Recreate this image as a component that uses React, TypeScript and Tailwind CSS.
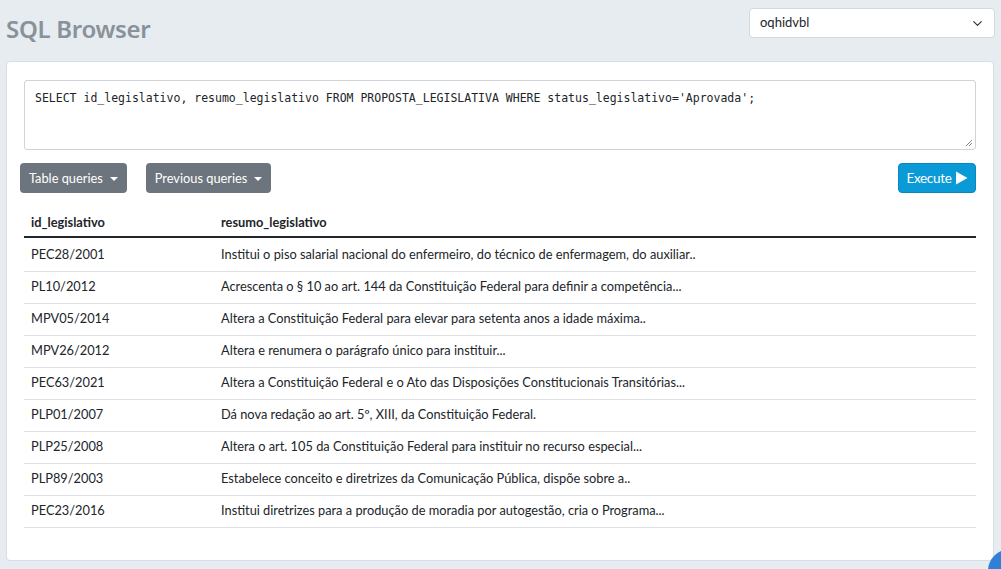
import { ChevronDown } from "lucide-react";

const rows = [
  ["PEC28/2001", "Institui o piso salarial nacional do enfermeiro, do técnico de enfermagem, do auxiliar.."],
  ["PL10/2012", "Acrescenta o § 10 ao art. 144 da Constituição Federal para definir a competência..."],
  ["MPV05/2014", "Altera a Constituição Federal para elevar para setenta anos a idade máxima.."],
  ["MPV26/2012", "Altera e renumera o parágrafo único para instituir..."],
  ["PEC63/2021", "Altera a Constituição Federal e o Ato das Disposições Constitucionais Transitórias..."],
  ["PLP01/2007", "Dá nova redação ao art. 5º, XIII, da Constituição Federal."],
  ["PLP25/2008", "Altera o art. 105 da Constituição Federal para instituir no recurso especial..."],
  ["PLP89/2003", "Estabelece conceito e diretrizes da Comunicação Pública, dispõe sobre a.."],
  ["PEC23/2016", "Institui diretrizes para a produção de moradia por autogestão, cria o Programa..."],
];

const query =
  "SELECT id_legislativo, resumo_legislativo FROM PROPOSTA_LEGISLATIVA WHERE status_legislativo='Aprovada';";

// small bootstrap-style caret
const Caret = () => (
  <span className="ml-[7px] inline-block w-0 h-0 border-l-[4px] border-r-[4px] border-t-[4px] border-l-transparent border-r-transparent border-t-white align-middle" />
);

export default function App() {
  return (
    <div
      className="relative min-h-screen overflow-hidden bg-[#e6ecf0] px-[6px] text-[#212529]"
      style={{ fontFamily: 'Lato, "Noto Sans", sans-serif' }}
    >
      {/* Header */}
      <div className="flex h-[61px] items-start justify-between">
        <h1
          className="mt-[11px] text-[24px] font-semibold tracking-[-0.3px] text-[#89929a]"
          style={{ fontFamily: '"Noto Sans", sans-serif' }}
        >
          SQL Browser
        </h1>
        <div className="mt-[8px] flex h-[30px] w-[246px] items-center justify-between rounded-[4px] border border-[#d3d9de] bg-white pl-[10px] pr-[9px] text-[13px] text-[#212529]">
          <span>oqhidvbl</span>
          <ChevronDown className="h-[15px] w-[15px] text-[#343a40]" strokeWidth={2} />
        </div>
      </div>

      {/* Card */}
      <div className="h-[500px] w-[988px] rounded-[4px] border border-[#d5dee5] bg-white px-[17px] pt-[18px]">
        <div className="relative h-[70px] w-full rounded-[3px] border border-[#ced4da] px-[10px] pt-[9px]">
          <div
            className="text-[11.5px] text-[#212529] whitespace-nowrap"
            style={{ fontFamily: '"DejaVu Sans Mono", "Liberation Mono", monospace' }}
          >
            {query}
          </div>
          <svg className="absolute bottom-[2px] right-[2px]" width="9" height="9" viewBox="0 0 9 9">
            <path d="M8 2 L2 8 M8 5 L5 8" stroke="#888" strokeWidth="1" />
          </svg>
        </div>

        <div className="mt-[13px] flex items-center justify-between">
          <div className="-ml-[4px] flex gap-[19px]">
            <button className="flex h-[30px] items-center rounded-[4px] bg-[#6c757d] px-[9px] pt-[1px] text-[12.8px] text-white">
              Table queries
              <Caret />
            </button>
            <button className="flex h-[30px] items-center rounded-[4px] bg-[#6c757d] px-[9px] pt-[1px] text-[12.8px] text-white">
              Previous queries
              <Caret />
            </button>
          </div>
          <button className="flex h-[30px] w-[78px] items-center justify-center gap-[3px] rounded-[4px] border border-[#0b86bf] bg-[#0a9ad7] text-[13.5px] tracking-[-0.3px] text-white">
            Execute
            <svg width="13" height="14" viewBox="0 0 13 14">
              <path d="M1 0.5 L12.5 7 L1 13.5 Z" fill="white" />
            </svg>
          </button>
        </div>

        <table className="mt-[12px] w-full border-collapse text-[12.8px]">
          <thead>
            <tr className="h-[32px] border-b-2 border-[#212529]">
              <th className="w-[197px] px-[7px] pt-[4px] text-left font-bold">id_legislativo</th>
              <th className="px-0 pt-[4px] text-left font-bold">resumo_legislativo</th>
            </tr>
          </thead>
          <tbody>
            {rows.map(([id, resumo]) => (
              <tr key={id} className="h-[32px] first:h-[34px] border-b border-[#dee2e6]">
                <td className="px-[7px]">{id}</td>
                <td>{resumo}</td>
              </tr>
            ))}
          </tbody>
        </table>
      </div>

      {/* floating button peeking in the corner */}
      <div className="absolute left-[988px] top-[549px] h-[44px] w-[44px] rounded-full bg-[#2f80d6]" />
    </div>
  );
}
